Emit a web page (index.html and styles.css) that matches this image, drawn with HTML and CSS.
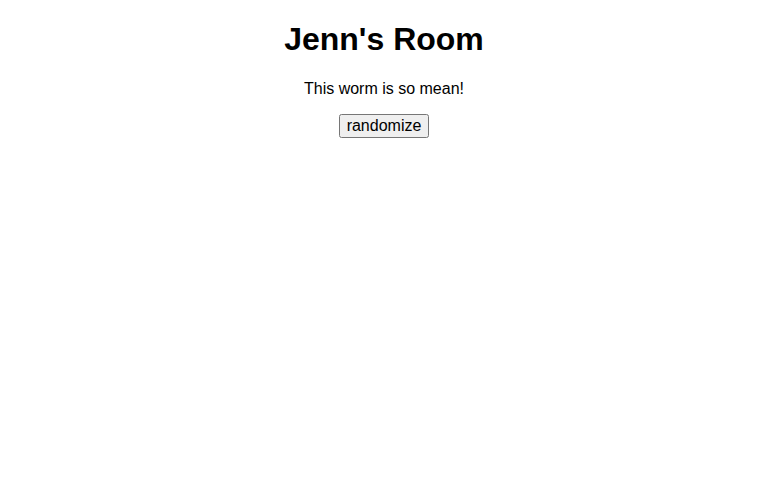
FILE: index.html
```html
<!DOCTYPE html>
<html lang="en">
<head>
    <meta charset="UTF-8">
    <meta name="viewport" content="width=device-width, initial-scale=1.0">
    <title>Jenn's Room</title>
    <link rel="stylesheet" href="styles.css">
</head>
<body>
    <h1>Jenn's Room</h1>
    <p>This worm is so mean!</p>
    <button type="button" class="randomize">randomize</button>
</body>
</html>
```

FILE: styles.css
```css
body {
    font-family: "Liberation Sans", Arial, sans-serif;
    background-color: #fff;
    color: #000;
    margin: 0;
    text-align: center;
}
.randomize {
    font-family: inherit;
    font-size: 16px;
}
```
